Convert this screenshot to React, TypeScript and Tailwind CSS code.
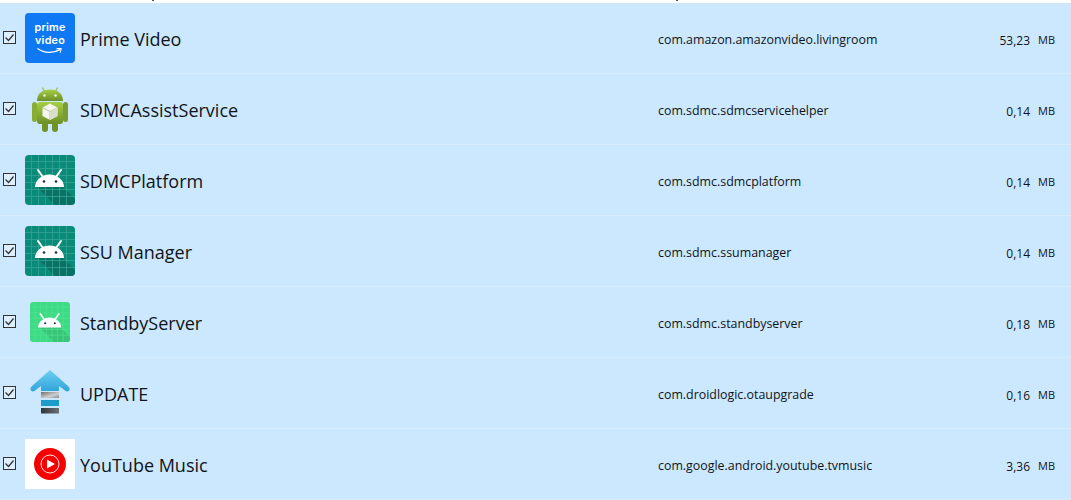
const FONT = "font-['Open_Sans','Noto_Sans',sans-serif]";

const GridTile = ({ bg, line, shade }: { bg: string; line: string; shade: string }) => (
  <svg viewBox="0 0 50 50" className="absolute inset-0 h-full w-full">
    <rect width="50" height="50" rx="4" fill={bg} />
    <path d="M12 32 L38 32 L50 44 L50 46 Q50 50 46 50 L30 50 Z" fill={shade} />
    {[6.5, 13.5, 20.5, 27.5, 34.5, 41.5].map((p) => (
      <g key={p} stroke={line} strokeWidth="0.8">
        <line x1={p} y1="0" x2={p} y2="50" />
        <line x1="0" y1={p} x2="50" y2={p} />
      </g>
    ))}
    <g stroke="#fff" strokeWidth="2" strokeLinecap="round">
      <line x1="18" y1="22" x2="13" y2="15" />
      <line x1="31" y1="22" x2="36" y2="15" />
    </g>
    <path d="M10 32 C10 25 17 19.5 24.5 19.5 C32 19.5 39 25 39 32 Z" fill="#fff" />
    <circle cx="19" cy="26.5" r="1.3" fill="#16324a" />
    <circle cx="31" cy="26.5" r="1.3" fill="#16324a" />
  </svg>
);

const PrimeIcon = () => (
  <div className="flex h-[50px] w-[50px] flex-col items-center rounded-[4px] bg-[#0f79f3] pt-[8px] font-['Inter',sans-serif] text-[10.8px] font-semibold leading-[13.2px] tracking-[0.2px] text-white">
    <span>prime</span>
    <span>video</span>
    <svg viewBox="0 0 30 8" className="h-[8px] w-[28px]" fill="none">
      <path d="M2 1.5 C9 6.5 19 6.5 25.5 2.5" stroke="#fff" strokeWidth="1.4" strokeLinecap="round" />
      <path d="M22.5 1.5 L27 1.5 L26 5.5" stroke="#fff" strokeWidth="1.2" strokeLinecap="round" strokeLinejoin="round" />
    </svg>
  </div>
);

const AndroidBoxIcon = () => (
  <svg viewBox="0 0 50 50" className="h-[50px] w-[50px]">
    <defs>
      <linearGradient id="droid" x1="0" y1="0" x2="0" y2="1">
        <stop offset="0" stopColor="#a6cf45" />
        <stop offset="1" stopColor="#6c8f28" />
      </linearGradient>
    </defs>
    <g stroke="#9dbf4a" strokeWidth="1.4" strokeLinecap="round">
      <line x1="17.5" y1="4" x2="20" y2="8" />
      <line x1="32.5" y1="4" x2="30" y2="8" />
    </g>
    <path d="M12 17 C12 9 18 5.5 25 5.5 C32 5.5 38 9 38 17 Z" fill="url(#droid)" />
    <circle cx="19.5" cy="11.5" r="1.2" fill="#eef5d8" />
    <circle cx="30.5" cy="11.5" r="1.2" fill="#eef5d8" />
    <rect x="12" y="18" width="26" height="22" rx="3" fill="url(#droid)" />
    <rect x="7" y="18" width="5" height="20" rx="2.5" fill="#88ad35" />
    <rect x="38" y="18" width="5" height="20" rx="2.5" fill="#7a9d30" />
    <rect x="17" y="38" width="6" height="10" rx="3" fill="#6f9229" />
    <rect x="27" y="38" width="6" height="10" rx="3" fill="#6f9229" />
    <path d="M25 19.5 L32.5 23.5 L32.5 32 L25 36 L17.5 32 L17.5 23.5 Z" fill="#f4f6ee" />
    <path d="M17.5 23.5 L25 27.5 L32.5 23.5 M25 27.5 L25 36" stroke="#a9b98c" strokeWidth="0.8" fill="none" />
    <path d="M25 27.5 L32.5 23.5 L32.5 32 L25 36 Z" fill="#d9dfcb" />
  </svg>
);

const UpdateIcon = () => (
  <svg viewBox="0 0 50 50" className="h-[50px] w-[50px]">
    <defs>
      <linearGradient id="arrow" x1="0" y1="0" x2="0" y2="1">
        <stop offset="0" stopColor="#6fcff5" />
        <stop offset="1" stopColor="#2fa4d8" />
      </linearGradient>
      <linearGradient id="bar1" x1="0" y1="0" x2="1" y2="1">
        <stop offset="0" stopColor="#6f6f6f" />
        <stop offset="0.6" stopColor="#cfcfcf" />
        <stop offset="1" stopColor="#8b8b8b" />
      </linearGradient>
      <linearGradient id="bar3" x1="0" y1="0" x2="1" y2="0">
        <stop offset="0" stopColor="#2f3436" />
        <stop offset="1" stopColor="#6c7073" />
      </linearGradient>
    </defs>
    <path
      d="M25 2 L43 18 Q46 21 43.5 23 Q42 24 40 22.5 L34 18 L34 23 L16 23 L16 18 L10 22.5 Q8 24 6.5 23 Q4 21 7 18 Z"
      fill="url(#arrow)"
    />
    <rect x="16" y="24" width="18" height="6" fill="url(#bar1)" />
    <rect x="16" y="32" width="18" height="6" fill="#1d9ccc" />
    <rect x="16" y="40" width="18" height="5.5" fill="url(#bar3)" />
  </svg>
);

const MusicIcon = () => (
  <div className="flex h-[50px] w-[50px] items-center justify-center bg-white">
    <svg viewBox="0 0 50 50" className="h-[50px] w-[50px]">
      <circle cx="25" cy="25" r="16" fill="#f90000" />
      <circle cx="25" cy="25" r="9" fill="none" stroke="#fff" strokeWidth="0.9" />
      <path d="M22 20.5 L30 25 L22 29.5 Z" fill="#fff" />
    </svg>
  </div>
);

const Tile = ({ size, bg, line, shade }: { size: string; bg: string; line: string; shade: string }) => (
  <div className="flex h-[50px] w-[50px] items-center justify-center">
    <div className={`relative ${size}`}>
      <GridTile bg={bg} line={line} shade={shade} />
    </div>
  </div>
);

const apps = [
  { name: "Prime Video", pkg: "com.amazon.amazonvideo.livingroom", size: "53,23", icon: <PrimeIcon /> },
  { name: "SDMCAssistService", pkg: "com.sdmc.sdmcservicehelper", size: "0,14", icon: <AndroidBoxIcon /> },
  { name: "SDMCPlatform", pkg: "com.sdmc.sdmcplatform", size: "0,14", icon: <Tile size="h-[50px] w-[50px]" bg="#0a8a78" line="#35a395" shade="#0a7264" /> },
  { name: "SSU Manager", pkg: "com.sdmc.ssumanager", size: "0,14", icon: <Tile size="h-[50px] w-[50px]" bg="#0a8a78" line="#35a395" shade="#0a7264" /> },
  { name: "StandbyServer", pkg: "com.sdmc.standbyserver", size: "0,18", icon: <Tile size="h-[40px] w-[40px]" bg="#3ddc84" line="#52e094" shade="#38c578" /> },
  { name: "UPDATE", pkg: "com.droidlogic.otaupgrade", size: "0,16", icon: <UpdateIcon /> },
  { name: "YouTube Music", pkg: "com.google.android.youtube.tvmusic", size: "3,36", icon: <MusicIcon /> },
];

export default function App() {
  return (
    <div className={`h-[500px] w-[1071px] overflow-hidden bg-white text-[#101418] ${FONT}`}>
      {/* descenders of the clipped header row */}
      <div className="flex h-[3px] items-start">
        <div className="ml-[152px] h-[1px] w-[2px] bg-[#555]" />
        <div className="ml-[522px] h-[1px] w-[2px] bg-[#555]" />
      </div>
      {apps.map((app) => (
        <div key={app.name} className="flex h-[71px] items-center border-b border-[#d8ecfc] bg-[#cce8ff] pb-[1px]">
          <div className="ml-[3px] flex h-[13px] w-[13px] items-center justify-center border border-[#333] bg-[#def0ff]">
            <svg viewBox="0 0 11 11" className="h-[11px] w-[11px]" fill="none">
              <path d="M1.5 5.5 L4.5 8.5 L9.5 2.5" stroke="#333" strokeWidth="1.3" />
            </svg>
          </div>
          <div className="ml-[9px] h-[50px] w-[50px] shrink-0">{app.icon}</div>
          <div className="ml-[5px] mt-[2px] w-[578px] shrink-0 text-[18px] leading-none">{app.name}</div>
          <div className="mt-[6px] w-[300px] shrink-0 text-[12.4px] leading-none">{app.pkg}</div>
          <div className="mt-[6px] w-[72px] shrink-0 text-right text-[12px] leading-none">{app.size}</div>
          <div className="ml-[8px] mt-[3px] text-[11px] leading-none">MB</div>
        </div>
      ))}
    </div>
  );
}
